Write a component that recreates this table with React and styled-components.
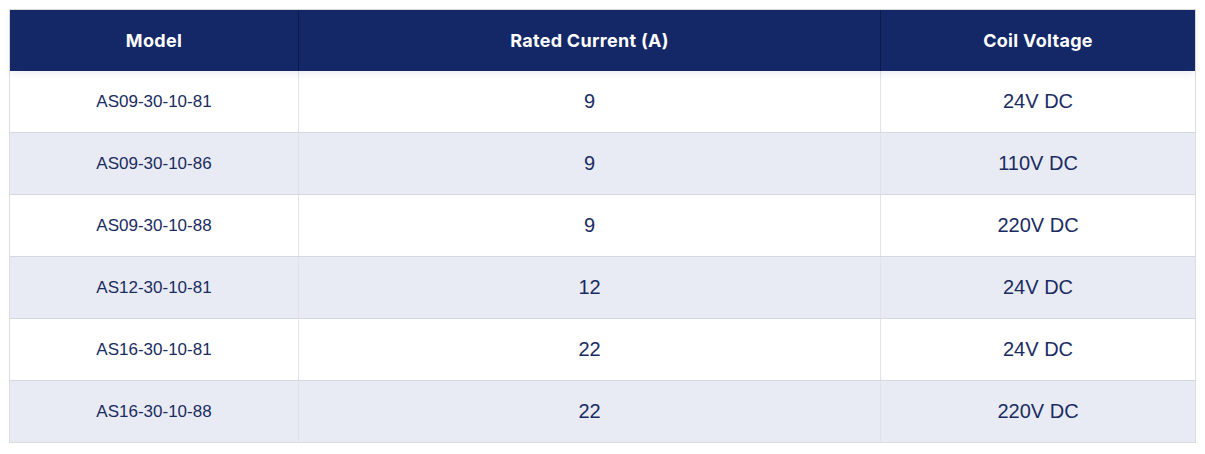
import React from "react";
import styled, { createGlobalStyle } from "styled-components";

const Global = createGlobalStyle`
  html, body { margin: 0; padding: 0; background: #ffffff; }
  body { font-family: "Liberation Sans", Arial, sans-serif; }
`;

const Page = styled.div`
  padding: 9px 10px 0 9px;
`;

const Table = styled.div`
  width: 1187px;
  border: 1px solid #dcdcdc;
  box-sizing: border-box;
`;

const cols = "288px 582px 315px";

const HeadRow = styled.div`
  display: grid;
  grid-template-columns: ${cols};
  height: 61px;
  background: #142766;
  position: relative;
  z-index: 1;
  box-shadow: 0 3px 7px rgba(20, 39, 102, 0.08);
`;

const HeadCell = styled.div`
  display: flex;
  align-items: center;
  justify-content: center;
  color: #ffffff;
  font-family: "Inter", "Open Sans", sans-serif;
  font-weight: 700;
  font-size: 18px;
  letter-spacing: 0.3px;
  border-left: ${(p) => (p.$first ? "none" : "1px solid #0d1b4a")};
`;

const Row = styled.div`
  display: grid;
  grid-template-columns: ${cols};
  height: ${(p) => (p.$last ? "61px" : "62px")};
  box-sizing: border-box;
  background: ${(p) => (p.$alt ? "#e8ebf3" : "#ffffff")};
  border-bottom: ${(p) => (p.$last ? "none" : "1px solid #d3d8e3")};
`;

const Cell = styled.div`
  display: flex;
  align-items: center;
  justify-content: center;
  color: #1a2b62;
  font-family: "Liberation Sans", Arial, sans-serif;
  font-size: ${(p) => (p.$small ? "17px" : "20px")};
  border-left: ${(p) => (p.$first ? "none" : "1px solid #e1e3e8")};
`;

const data = [
  ["AS09-30-10-81", "9", "24V DC"],
  ["AS09-30-10-86", "9", "110V DC"],
  ["AS09-30-10-88", "9", "220V DC"],
  ["AS12-30-10-81", "12", "24V DC"],
  ["AS16-30-10-81", "22", "24V DC"],
  ["AS16-30-10-88", "22", "220V DC"],
];

export default function App() {
  return (
    <Page>
      <Global />
      <Table>
        <HeadRow>
          <HeadCell $first>Model</HeadCell>
          <HeadCell>Rated Current (A)</HeadCell>
          <HeadCell>Coil Voltage</HeadCell>
        </HeadRow>
        {data.map((r, i) => (
          <Row key={i} $alt={i % 2 === 1} $last={i === data.length - 1}>
            <Cell $first $small>{r[0]}</Cell>
            <Cell>{r[1]}</Cell>
            <Cell>{r[2]}</Cell>
          </Row>
        ))}
      </Table>
    </Page>
  );
}
